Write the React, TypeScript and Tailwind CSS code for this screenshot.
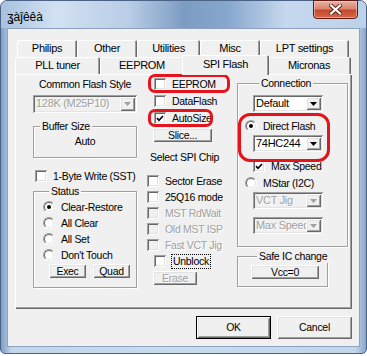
import clsx from "clsx";

const raised =
  "shadow-[inset_1px_1px_0_#fff,inset_-1px_-1px_0_#696969,inset_2px_2px_0_#e3e3e3,inset_-2px_-2px_0_#a0a0a0]";
const sunken =
  "shadow-[inset_1px_1px_0_#a0a0a0,inset_-1px_-1px_0_#fff,inset_2px_2px_0_#696969,inset_-2px_-2px_0_#e3e3e3]";
const grayText = "text-[#a0a0a0] [text-shadow:1px_1px_0_#fff]";

function Tick() {
  return (
    <svg width="8" height="7" viewBox="0 0 8 7">
      <path d="M1 3.2 L3 5.3 L7 1" fill="none" stroke="#000" strokeWidth="1.7" />
    </svg>
  );
}

function Arrow({ disabled }: { disabled?: boolean }) {
  return (
    <svg width="7" height="4" viewBox="0 0 7 4">
      <path d="M0 0 H7 L3.5 4 Z" fill={disabled ? "#a0a0a0" : "#000"} />
    </svg>
  );
}

function Check({
  label,
  checked,
  disabled,
  className,
  focus,
}: {
  label: string;
  checked?: boolean;
  disabled?: boolean;
  className?: string;
  focus?: boolean;
}) {
  return (
    <div className={clsx("flex h-[16px] items-center gap-[6px]", className)}>
      <span
        className={clsx(
          "flex h-[12px] w-[12px] shrink-0 items-center justify-center",
          sunken,
          disabled ? "bg-[#f0f0f0]" : "bg-white"
        )}
      >
        {checked && <Tick />}
      </span>
      <span
        className={clsx(
          "whitespace-nowrap leading-[13px]",
          disabled && grayText,
          focus && "-ml-[1px] border border-dotted border-black px-[1px]"
        )}
      >
        {label}
      </span>
    </div>
  );
}

function Radio({ label, checked, className }: { label: string; checked?: boolean; className?: string }) {
  return (
    <div className={clsx("flex h-[16px] items-center gap-[6px]", className)}>
      <span className="flex h-[12px] w-[12px] shrink-0 items-center justify-center rounded-full border border-[#a0a0a0] border-r-white border-b-white">
        <span className="flex h-[10px] w-[10px] items-center justify-center rounded-full border border-[#696969] border-r-[#e3e3e3] border-b-[#e3e3e3] bg-white">
          {checked && <span className="h-[4px] w-[4px] rounded-full bg-black" />}
        </span>
      </span>
      <span className="whitespace-nowrap leading-[13px]">{label}</span>
    </div>
  );
}

function Combo({
  text,
  disabled,
  className,
}: {
  text: string;
  disabled?: boolean;
  className?: string;
}) {
  return (
    <div
      className={clsx(
        "flex h-[17px] p-[2px]",
        sunken,
        disabled ? "bg-[#f0f0f0]" : "bg-white",
        className
      )}
    >
      <span
        className={clsx(
          "flex-1 overflow-hidden whitespace-nowrap pl-[1px] text-[11px] leading-[13px]",
          disabled && grayText
        )}
      >
        {text}
      </span>
      <span className={clsx("flex w-[15px] items-center justify-center bg-[#f0f0f0]", raised)}>
        <Arrow disabled={disabled} />
      </span>
    </div>
  );
}

function Btn({
  children,
  disabled,
  className,
}: {
  children: React.ReactNode;
  disabled?: boolean;
  className?: string;
}) {
  return (
    <div
      className={clsx(
        "flex items-center justify-center bg-[#f0f0f0] leading-[13px]",
        raised,
        disabled && grayText,
        className
      )}
    >
      {children}
    </div>
  );
}

function Group({
  title,
  className,
  children,
}: {
  title: string;
  className?: string;
  children?: React.ReactNode;
}) {
  return (
    <div
      className={clsx(
        "flex flex-col border border-[#a0a0a0] shadow-[inset_1px_1px_0_#fff,1px_1px_0_#fff]",
        className
      )}
    >
      <span className="-mt-[7px] ml-[6px] w-fit whitespace-nowrap bg-[#f0f0f0] px-[2px] leading-[13px]">
        {title}
      </span>
      {children}
    </div>
  );
}

function Tab({ label, w, selected }: { label: string; w: string; selected?: boolean }) {
  return (
    <div
      className={clsx(
        "flex items-center justify-center rounded-t-[2px] bg-[#f0f0f0] text-[11px] shadow-[inset_1px_1px_0_#fff,inset_-1px_0_0_#696969,inset_-2px_0_0_#a0a0a0]",
        w,
        selected ? "relative z-10 -mx-[2px] -mb-[1px] h-[20px] pb-[2px]" : "h-[17px]"
      )}
    >
      {label}
    </div>
  );
}

export default function App() {
  return (
    <div className="h-[356px] w-[367px] overflow-hidden bg-white font-['Liberation_Sans',Arial,sans-serif] text-[10.5px] tracking-[-0.3px] text-black">
      {/* window frame */}
      <div className="flex h-[354px] w-[367px] flex-col rounded-t-[7px] rounded-b-[5px] border border-[#4b6386] bg-[linear-gradient(to_right,#7f9ec4_0%,#c2d6ec_3%,#c9dbef_50%,#c2d6ec_97%,#8aa6c9_100%)]">
        {/* title bar */}
        <div className="flex h-[27px] items-start justify-between rounded-t-[6px] bg-[linear-gradient(to_right,#a7c1df_0%,#d2e1f2_15%,#b9cde6_35%,#7d9cc3_50%,#86a6ce_62%,#c6d8ee_78%,#bcd1ea_100%)]">
          <span className="pl-[6px] pt-[9px] text-[12px] leading-[14px] tracking-normal text-black">ʓàĵêêà</span>
          <div className="mr-[8px] -mt-[1px] flex h-[19px] w-[45px] items-center justify-center rounded-b-[4px] border border-[#5a1a12] bg-[linear-gradient(to_bottom,#eab0a4_0%,#d98572_45%,#c44a30_55%,#d8664a_100%)] shadow-[inset_0_0_0_1px_rgba(255,220,210,0.5)]">
            <svg width="13" height="11" viewBox="0 0 13 11">
              <path d="M2 1.5 L11 9.5 M11 1.5 L2 9.5" stroke="#5a2418" strokeWidth="4" strokeLinecap="square" />
              <path d="M2 1.5 L11 9.5 M11 1.5 L2 9.5" stroke="#fff" strokeWidth="2.2" strokeLinecap="square" />
            </svg>
          </div>
        </div>

        {/* client area */}
        <div className="mx-[6px] flex h-[319px] flex-col border border-[#8da2bd] bg-[#f0f0f0]">
          <div className="ml-[7px] mt-[11px] flex w-[337px] flex-col">
            {/* back tab row */}
            <div className="ml-[2px] flex h-[17px]">
              <Tab label="Philips" w="w-[60px]" />
              <Tab label="Other" w="w-[60px]" />
              <Tab label="Utilities" w="w-[63px]" />
              <Tab label="Misc" w="w-[60px]" />
              <Tab label="LPT settings" w="w-[89px]" />
            </div>
            {/* front tab row */}
            <div className="flex h-[17px] items-end">
              <Tab label="PLL tuner" w="w-[85px]" />
              <Tab label="EEPROM" w="w-[84px]" />
              <Tab label="SPI Flash" w="w-[87px]" selected />
              <Tab label="Micronas" w="w-[84px]" />
            </div>

            {/* panel */}
            <div className="relative flex h-[235px] items-start bg-[#f0f0f0] pl-[18px] shadow-[inset_1px_1px_0_#fff,inset_-1px_-1px_0_#696969,inset_-2px_-2px_0_#a0a0a0]">
              {/* left column */}
              <div className="flex w-[104px] flex-col">
                <span className="mt-[4px] text-center leading-[13px]">Common Flash Style</span>
                <Combo text="128K (M25P10)" disabled className="mt-[4px] h-[18px]" />
                <Group title="Buffer Size" className="mt-[13px] h-[32px]">
                  <span className="mt-[2px] text-center leading-[13px]">Auto</span>
                </Group>
                <Check label="1-Byte Write (SST)" className="ml-[2px] mt-[10px]" />
                <Group title="Status" className="mt-[7px] h-[97px] pl-[9px]">
                  <Radio label="Clear-Restore" checked className="mt-[1px]" />
                  <Radio label="All Clear" />
                  <Radio label="All Set" />
                  <Radio label="Don't Touch" />
                  <div className="ml-[6px] mt-[1px] flex gap-[7px]">
                    <Btn className="h-[14px] w-[37px]">Exec</Btn>
                    <Btn className="h-[14px] w-[37px]">Quad</Btn>
                  </div>
                </Group>
              </div>

              {/* middle column */}
              <div className="ml-[10px] flex w-[90px] flex-col">
                <Check label="EEPROM" className="ml-[7px] mt-[2px]" />
                <Check label="DataFlash" className="ml-[7px] mt-[1px]" />
                <Check label="AutoSize" checked className="ml-[7px] mt-[1px]" />
                <Btn className="ml-[6px] mt-[2px] h-[14px] w-[59px]">Slice...</Btn>
                <span className="ml-[3px] mt-[9px] whitespace-nowrap leading-[13px]">Select SPI Chip</span>
                <div className="mt-[9px] flex flex-col">
                  <Check label="Sector Erase" />
                  <Check label="25Q16 mode" />
                  <Check label="MST RdWait" disabled />
                  <Check label="Old MST ISP" disabled />
                  <Check label="Fast VCT Jig" disabled />
                  <Check label="Unblock" focus className="ml-[7px]" />
                </div>
                <Btn disabled className="ml-[6px] mt-[2px] h-[14px] w-[44px]">
                  Erase
                </Btn>
              </div>

              {/* right column */}
              <div className="flex w-[111px] flex-col">
                <Group title="Connection" className="mt-[9px] h-[164px] pl-[15px]">
                  <Combo text="Default" className="mt-[5px] w-[70px]" />
                  <Radio label="Direct Flash" checked className="-ml-[8px] mt-[6px]" />
                  <Combo text="74HC244" className="mt-[1px] w-[70px]" />
                  <Check label="Max Speed" checked className="mt-[6px]" />
                  <Radio label="MStar (I2C)" className="-ml-[8px] mt-[1px]" />
                  <Combo text="VCT Jig" disabled className="mt-[1px] w-[70px]" />
                  <Combo text="Max Speed" disabled className="mt-[8px] w-[70px]" />
                </Group>
                <Group title="Safe IC change" className="mt-[9px] h-[31px] w-[91px] pl-[13px]">
                  <Btn className="mt-[2px] h-[14px] w-[68px]">Vcc=0</Btn>
                </Group>
              </div>

              {/* red annotation outlines */}
              <div className="absolute left-[133px] top-[0px] h-[19px] w-[82px] rounded-[7px] border-[3px] border-[#e3141c]" />
              <div className="absolute left-[133px] top-[35px] h-[18px] w-[65px] rounded-[7px] border-[3px] border-[#e3141c]" />
              <div className="absolute left-[223px] top-[39px] h-[49px] w-[92px] rounded-[12px] border-[3px] border-[#e3141c]" />
            </div>
          </div>

          {/* dialog buttons */}
          <div className="mr-[7px] mt-[7px] flex justify-end gap-[6px]">
            <div className="border border-black">
              <Btn className="h-[21px] w-[73px]">OK</Btn>
            </div>
            <Btn className="h-[23px] w-[75px]">Cancel</Btn>
          </div>
        </div>
      </div>
    </div>
  );
}
